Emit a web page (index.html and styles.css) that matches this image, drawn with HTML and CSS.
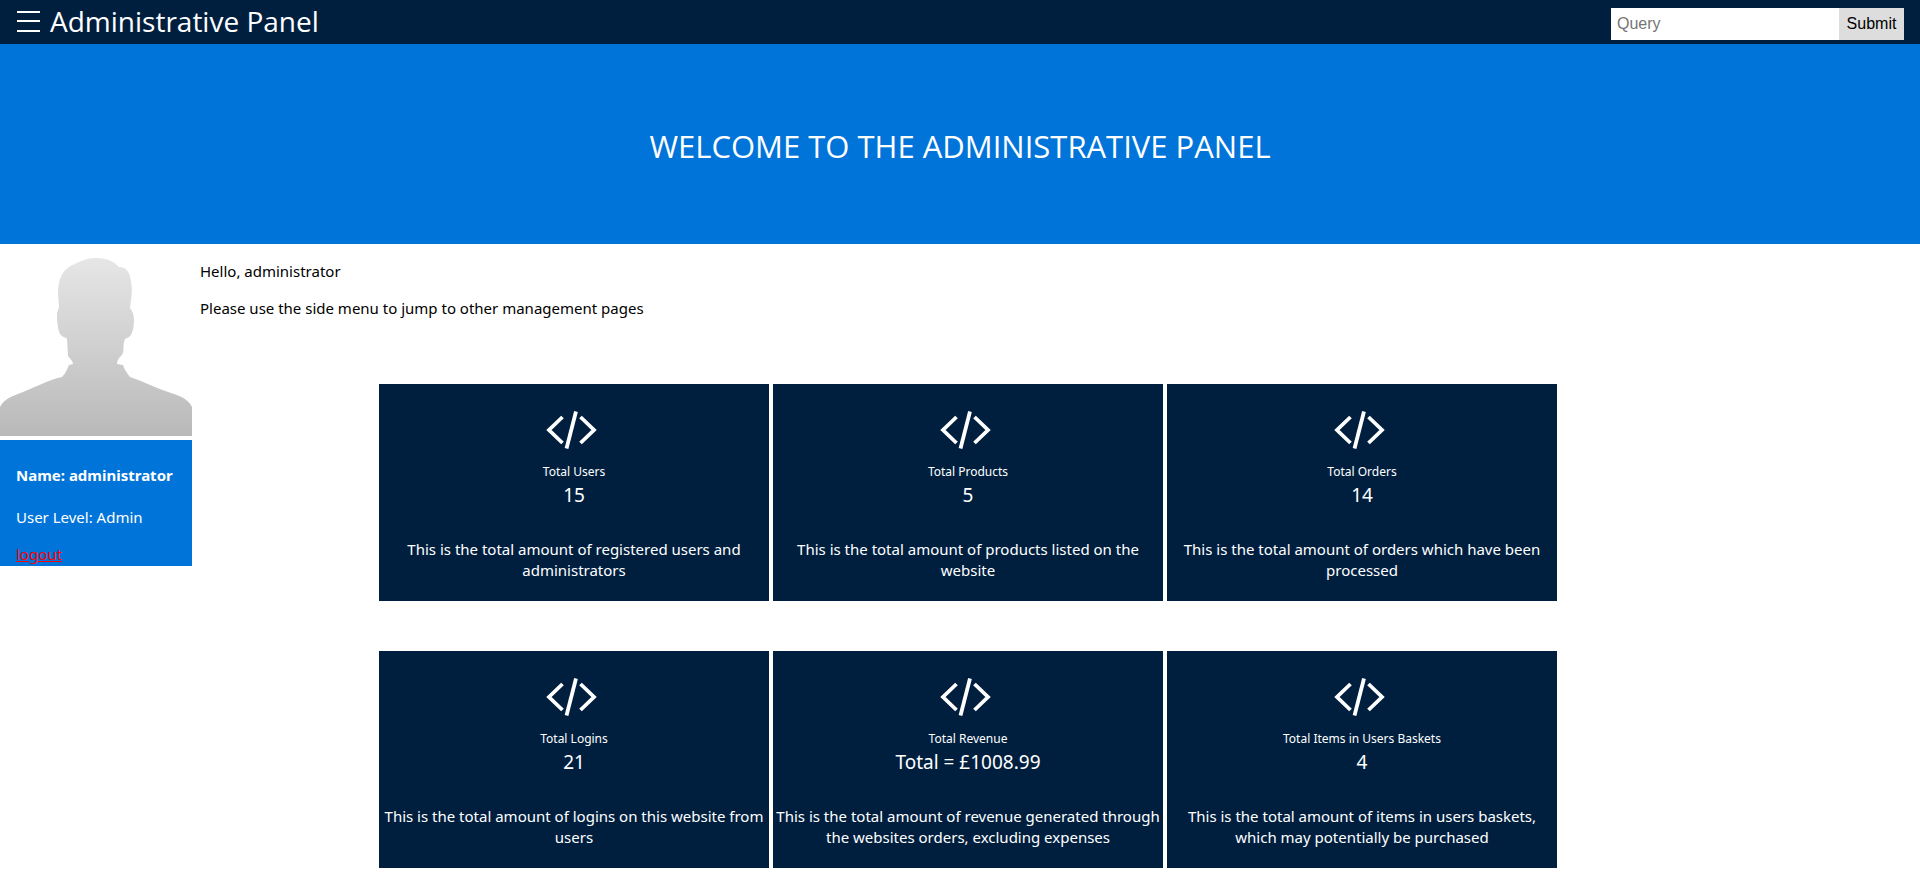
FILE: index.html
```html
<!DOCTYPE html>
<html lang="en">
<head>
<meta charset="utf-8">
<title>Administrative Panel</title>
<link rel="stylesheet" href="styles.css">
</head>
<body>
<svg class="sprite" aria-hidden="true">
  <symbol id="code" viewBox="0 0 52 40">
    <path d="M17.500 7 4 20 17.500 33M35.500 7 49 20 35.500 33" fill="none" stroke="#fff" stroke-width="3.800"/>
    <path d="M31 1.500 21.500 38.500" fill="none" stroke="#fff" stroke-width="3.800"/>
  </symbol>
</svg>
<header class="topbar">
  <div class="brand">
    <button class="menu" type="button" aria-label="Open menu">
      <svg class="menu-icon" viewBox="0 0 24 24" aria-hidden="true"><path d="M1 3h23M1 12h23M1 22h23" stroke="#fff" stroke-width="2"/></svg>
    </button>
    <span>Administrative Panel</span>
  </div>
  <form class="search">
    <input class="query" type="text" placeholder="Query" aria-label="Query">
    <button class="submit" type="submit">Submit</button>
  </form>
</header>
<section class="hero"><h1 class="hero-title">WELCOME TO THE ADMINISTRATIVE PANEL</h1></section>
<div class="page">
  <aside class="sidebar">
    <svg class="avatar" viewBox="0 0 192 192" role="img" aria-label="Profile picture">
      <defs><linearGradient id="shade" x1="0" y1="0" x2="0" y2="1"><stop offset="0" stop-color="#e6e6e6"/><stop offset="1" stop-color="#b9b9b9"/></linearGradient></defs>
      <path fill="url(#shade)" d="M0 185V156C4 148 12 145 23 141C38 135 48 129 62 126C66 122 67 118 69 114L73 113C73 110 70 108 68 105L67 88C66 86 63 87 60 83C57 76 57 68 57 62L59 56L58 43C58 27 63 17 75 13C84 8 90 7 97 7C108 7 114 11 119 16C127 16 130 22 131 31C133 40 131 48 130 57C133 61 134 65 134 69C134 77 132 84 129 86L125 88C122 96 125 98 122 104C119 107 117 109 117 113L123 114C124 118 127 122 130 126C145 131 158 138 171 142C184 146 189 150 192 156V185Z" transform="translate(0 7)"/>
    </svg>
    <div class="profile">
      <h2 class="name">Name: administrator</h2>
      <p class="level">User Level: Admin</p>
      <a class="logout" href="#logout">logout</a>
    </div>
  </aside>
  <main class="content">
    <p class="intro">Hello, administrator</p>
    <p class="intro">Please use the side menu to jump to other management pages</p>
    <div class="cards">
      <article class="card"><svg class="icon" aria-hidden="true"><use href="#code"/></svg><h3 class="label">Total Users</h3><p class="value">15</p><p class="note">This is the total amount of registered users and administrators</p></article>
      <article class="card"><svg class="icon" aria-hidden="true"><use href="#code"/></svg><h3 class="label">Total Products</h3><p class="value">5</p><p class="note">This is the total amount of products listed on the website</p></article>
      <article class="card"><svg class="icon" aria-hidden="true"><use href="#code"/></svg><h3 class="label">Total Orders</h3><p class="value">14</p><p class="note">This is the total amount of orders which have been processed</p></article>
      <article class="card"><svg class="icon" aria-hidden="true"><use href="#code"/></svg><h3 class="label">Total Logins</h3><p class="value">21</p><p class="note">This is the total amount of logins on this website from users</p></article>
      <article class="card"><svg class="icon" aria-hidden="true"><use href="#code"/></svg><h3 class="label">Total Revenue</h3><p class="value">Total = £1008.99</p><p class="note">This is the total amount of revenue generated through the websites orders, excluding expenses</p></article>
      <article class="card"><svg class="icon" aria-hidden="true"><use href="#code"/></svg><h3 class="label">Total Items in Users Baskets</h3><p class="value">4</p><p class="note">This is the total amount of items in users baskets, which may potentially be purchased</p></article>
    </div>
  </main>
</div>
</body>
</html>
```
FILE: styles.css
```css
* { box-sizing: border-box; }
body { margin: 0; background: #fff; color: #000; font: 15px/21px "Noto Sans", "Open Sans", sans-serif; }
h1, h2, h3, p { margin: 0; font-weight: 400; }
.sprite { display: none; }

.topbar { display: flex; justify-content: space-between; align-items: flex-start; padding: 0 16px; background: #001f3f; color: #fff; height: 44px; }
.brand { display: flex; align-items: center; gap: 10px; font-family: "Open Sans", "Noto Sans", sans-serif; font-size: 28px; line-height: 42px; }
.menu { display: flex; padding: 0; border: 0; background: none; cursor: pointer; }
.menu-icon { width: 24px; height: 24px; }
.search { display: flex; padding-top: 8px; }
.query, .submit { height: 32px; border: 0; border-radius: 0; font: 16px "Liberation Sans", Arial, sans-serif; }
.query { width: 228px; padding: 0 6px; background: #fff; }
.query::placeholder { color: #757575; }
.submit { width: 65px; padding: 0; background: #ddd; color: #000; }

.hero { height: 200px; padding-top: 80px; background: #0074d9; color: #fff; text-align: center; }
.hero-title { font-family: "Open Sans", "Noto Sans", sans-serif; font-size: 31px; line-height: 44px; }

.page { display: flex; align-items: flex-start; gap: 8px; }
.sidebar { width: 10%; min-width: 192px; flex: none; }
.avatar { display: block; width: 100%; margin-bottom: 4px; }
.profile { padding: 25px 16px 2px; background: #0074d9; color: #fff; }
.name { font-size: 15px; line-height: 21px; font-weight: 700; margin-bottom: 21px; white-space: nowrap; }
.level { margin-bottom: 16px; }
.logout { display: block; color: #f00; line-height: 20px; }

.content { flex: 1; padding-top: 17px; }
.intro { margin-bottom: 16px; }
.cards { display: flex; flex-wrap: wrap; justify-content: center; gap: 50px 4px; padding: 49px 184px 20px 0; }
.card { display: flex; flex-direction: column; align-items: center; width: 390px; padding: 26px 3px 20px; background: #001f3f; color: #fff; text-align: center; }
.icon { width: 52px; height: 40px; margin: 0 6px 12px 0; }
.label { font-size: 12px; line-height: 20px; }
.value { font-size: 19px; line-height: 26px; margin-bottom: 31px; }
.note { line-height: 21px; }
```
